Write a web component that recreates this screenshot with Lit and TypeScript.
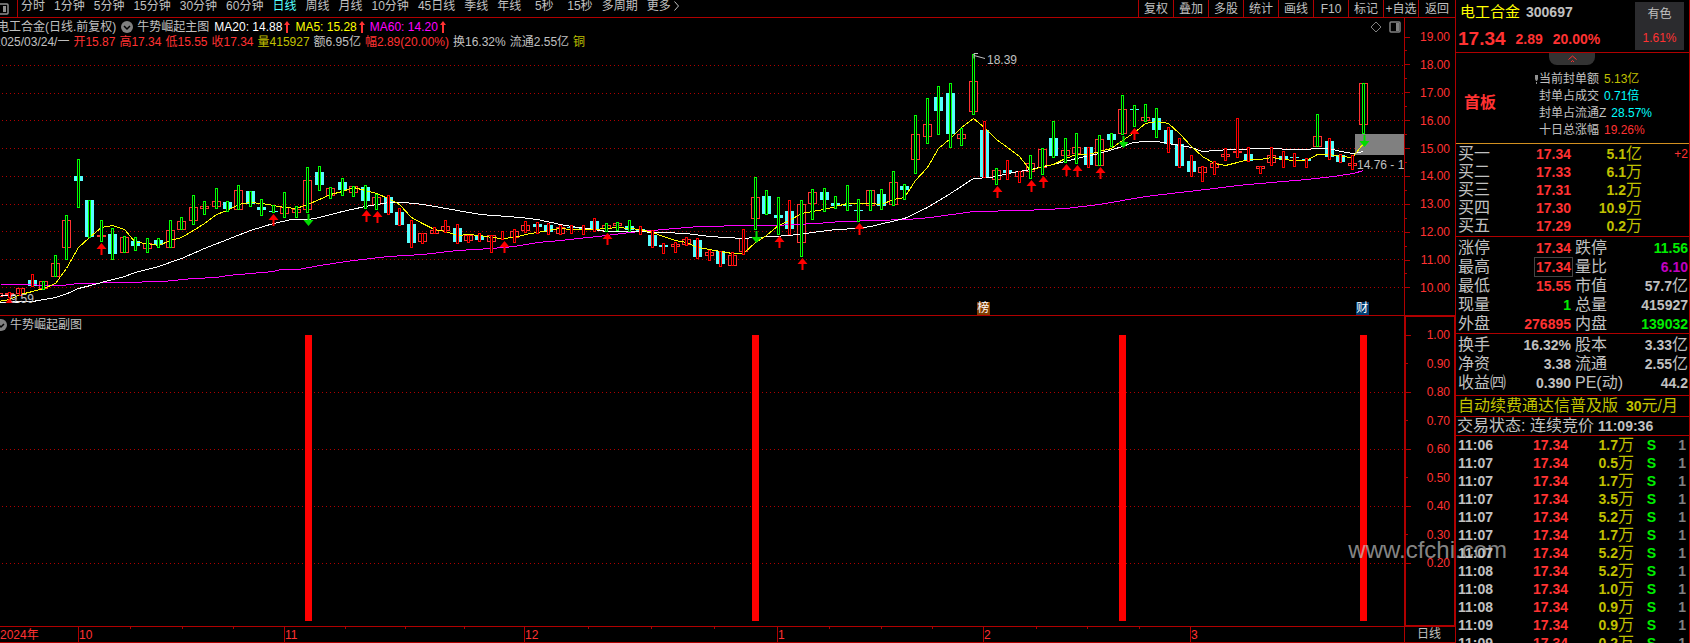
import { LitElement, html, svg, css } from "lit";
import { customElement } from "lit/decorators.js";
import { classMap } from "lit/directives/class-map.js";

type Bar = [number, number, "r" | "c", number, number, "g" | "r"];

// Session bars: body top, body bottom, body kind, range top, range bottom, signal colour.
const BARS: Bar[] = [
  [293, 296, "r", 293, 296, "r"], [293, 294, "r", 292, 297, "r"], [288, 293, "r", 288, 295, "r"], [280, 285, "c", 274, 286, "r"],
  [281, 288, "r", 281, 289, "g"], [263, 276, "r", 255, 276, "g"], [220, 247, "r", 215, 259, "g"], [176, 180, "c", 159, 207, "g"],
  [200, 236, "c", 200, 237, "g"], [235, 236, "r", 220, 241, "g"], [234, 253, "c", 228, 259, "g"], [237, 252, "r", 236, 252, "g"],
  [241, 245, "c", 237, 250, "g"], [243, 248, "r", 238, 252, "g"], [240, 244, "c", 238, 247, "g"], [230, 247, "r", 220, 247, "g"],
  [221, 229, "r", 217, 229, "g"], [207, 220, "r", 195, 224, "g"], [206, 208, "r", 201, 214, "g"], [201, 206, "r", 188, 208, "g"],
  [202, 208, "c", 201, 211, "g"], [190, 209, "r", 185, 209, "g"], [191, 203, "c", 191, 206, "g"], [207, 209, "c", 199, 215, "g"],
  [211, 211, "c", 205, 212, "g"], [207, 213, "r", 192, 217, "g"], [209, 212, "r", 206, 217, "g"], [180, 209, "r", 167, 212, "g"],
  [172, 184, "c", 166, 190, "g"], [188, 195, "r", 187, 198, "g"], [182, 189, "c", 178, 195, "g"], [186, 192, "r", 186, 196, "g"],
  [187, 200, "c", 185, 208, "g"], [197, 204, "r", 194, 209, "g"], [197, 212, "c", 195, 214, "r"], [212, 224, "c", 208, 225, "r"],
  [224, 242, "c", 220, 247, "r"], [233, 241, "r", 233, 243, "r"], [230, 233, "r", 227, 233, "r"], [226, 230, "r", 220, 232, "r"],
  [228, 241, "c", 224, 243, "r"], [235, 240, "r", 235, 242, "r"], [236, 239, "c", 233, 241, "r"], [235, 241, "r", 235, 252, "r"],
  [237, 237, "r", 231, 239, "r"], [231, 237, "r", 229, 242, "r"], [225, 230, "r", 221, 232, "r"], [224, 226, "c", 222, 233, "r"],
  [225, 231, "c", 223, 234, "r"], [227, 233, "r", 225, 234, "r"], [227, 227, "c", 225, 233, "r"], [228, 228, "c", 225, 234, "r"],
  [221, 229, "c", 218, 231, "r"], [225, 228, "r", 223, 231, "g"], [223, 225, "r", 222, 230, "g"], [226, 229, "c", 220, 231, "g"],
  [229, 230, "c", 226, 234, "r"], [235, 245, "c", 230, 247, "r"], [245, 246, "c", 243, 253, "r"], [244, 246, "r", 242, 252, "r"],
  [239, 244, "r", 237, 245, "r"], [240, 256, "c", 238, 258, "r"], [252, 255, "r", 250, 260, "r"], [251, 263, "c", 251, 266, "r"],
  [255, 265, "r", 252, 265, "r"], [238, 251, "r", 229, 254, "r"], [197, 218, "r", 177, 229, "g"], [196, 213, "c", 190, 214, "g"],
  [215, 217, "c", 197, 234, "g"], [211, 228, "c", 200, 234, "r"], [204, 242, "r", 200, 256, "g"], [192, 203, "r", 189, 219, "g"],
  [192, 199, "c", 188, 211, "g"], [203, 205, "c", 196, 208, "g"], [205, 205, "c", 185, 210, "g"], [210, 210, "c", 199, 221, "g"],
  [190, 205, "r", 190, 210, "g"], [194, 205, "c", 189, 209, "g"], [182, 204, "r", 171, 205, "g"], [186, 189, "c", 184, 199, "g"],
  [134, 159, "r", 115, 173, "g"], [124, 136, "r", 98, 143, "g"], [97, 110, "c", 86, 134, "g"], [93, 133, "c", 83, 147, "g"],
  [134, 138, "r", 128, 145, "g"], [81, 111, "r", 54, 114, "g"], [130, 176, "c", 121, 177, "r"], [170, 179, "r", 168, 184, "g"],
  [170, 172, "c", 160, 179, "r"], [171, 176, "r", 171, 182, "r"], [163, 171, "r", 155, 178, "g"], [149, 167, "r", 148, 174, "g"],
  [138, 155, "c", 121, 157, "g"], [150, 155, "r", 138, 162, "g"], [147, 153, "r", 133, 163, "g"], [147, 164, "c", 147, 167, "r"],
  [139, 165, "r", 135, 165, "g"], [134, 139, "c", 133, 146, "g"], [109, 133, "r", 95, 134, "g"], [109, 109, "c", 105, 126, "g"],
  [117, 120, "r", 104, 121, "g"], [118, 129, "c", 108, 137, "g"], [130, 143, "c", 127, 152, "r"], [144, 165, "c", 138, 167, "r"],
  [161, 171, "c", 155, 176, "r"], [167, 172, "r", 166, 181, "r"], [163, 167, "r", 161, 174, "r"], [154, 156, "r", 148, 160, "r"],
  [151, 152, "r", 118, 157, "r"], [154, 160, "c", 147, 161, "r"], [166, 168, "r", 166, 173, "r"], [155, 162, "r", 147, 165, "r"],
  [156, 159, "c", 151, 167, "r"], [157, 157, "c", 153, 166, "r"], [159, 160, "c", 158, 167, "r"], [136, 146, "r", 114, 146, "g"],
  [141, 156, "c", 138, 159, "r"], [155, 161, "c", 154, 162, "r"], [163, 165, "r", 155, 169, "r"], [83, 124, "r", 83, 133, "g"],
];

const FIRST_X = -2;
const barX = (i: number) => (i === 0 ? FIRST_X : Math.round(9 + (i - 1) * 11.4746));

const MA5 = [
  301, 299, 294, 291, 288, 283, 268, 247, 237, 227, 225, 229, 242, 243, 245, 240, 237, 230, 223, 214, 210, 204, 202, 203, 205,
  207, 208, 204, 199, 194, 191, 187, 190, 193, 198, 204, 217, 223, 229, 231, 235, 234, 235, 237, 238, 237, 234, 232, 230, 228,
  229, 229, 229, 228, 227, 228, 229, 232, 236, 240, 242, 247, 249, 251, 253, 253, 242, 235, 225, 220, 213, 211, 209, 206,
  203, 203, 203, 204, 199, 197, 180, 167, 148, 138, 127, 118, 127, 139, 147, 156, 170, 166, 164, 158, 154, 154, 151, 148,
  140, 132, 123, 121, 123, 133, 146, 156, 163, 165, 162, 159, 159, 157, 159, 160, 160, 154, 154, 156, 157, 143,
];
const MA20 =
  "0,302 20,301 32,301 44,299 55,297 67,293 78,288 90,285 101,282 124,276 135,272 158,266 181,258 204,248 227,239 250,230 273,223 " +
  "291,219 308,219 319,217 342,211 365,206 388,202 403,202 423,204 457,210 480,214 520,217 537,219 560,224 571,226 594,229 606,231 " +
  "629,231 663,232 686,233 709,236 743,238 755,237 789,235 812,232 835,229 858,228 870,226 904,218 927,207 950,193 973,178 " +
  "990,177 1013,172 1030,169 1053,164 1076,158 1099,153 1122,146 1133,142 1145,141 1156,141 1168,143 1191,147 1202,151 1230,149 " +
  "1270,148 1293,149 1329,148 1340,151 1353,153 1363,151";
const MA60 =
  "0,284 33,284 40,285 62,285 78,283 163,281 193,278 216,277 227,275 273,271 280,269 298,269 319,265 353,260 388,256 422,254 " +
  "457,250 491,248 514,246 537,242 560,240 606,235 629,232 663,229 698,226 750,225 773,225 817,223 840,221 907,219 930,217 " +
  "973,211 1023,210 1065,208 1099,204 1145,196 1179,192 1214,188 1237,185 1271,182 1306,179 1333,176 1353,173 1363,170";

const UP: [number, number][] = [
  [101, 243], [273, 214], [366, 210], [377, 211], [504, 241], [607, 233], [779, 236], [802, 258], [859, 223],
  [997, 186], [1031, 180], [1043, 176], [1066, 164], [1077, 165], [1100, 167], [1134, 128],
];
const DOWN: [number, number][] = [[308, 214], [756, 231], [1123, 136], [1364, 135]];

const PRICE_ROWS = [65, 93, 120, 148, 176, 204, 231, 259, 287];
const RATIO_ROWS = [392, 449, 506, 563];
const SPIKES = [305, 752, 1119, 1360];

const PERIODS = [
  "分时", "1分钟", "5分钟", "15分钟", "30分钟", "60分钟", "日线", "周线", "月线", "10分钟", "45日线", "季线", "年线",
  "5秒", "15秒", "多周期", "更多",
];
const ACTIONS = ["复权", "叠加", "多股", "统计", "画线", "F10", "标记", "+自选", "返回"];

const OHLC: [string, string][] = [
  ["开15.87", "red"], ["高17.34", "red"], ["低15.55", "red"], ["收17.34", "red"], ["量415927", "gold"],
  ["额6.95亿", "grey"], ["幅2.89(20.00%)", "red"], ["换16.32%", "grey"], ["流通2.55亿", "grey"], ["铜", "gold"],
];

const BIDS = [
  ["买一", "17.34", "5.1", "亿", "+2"], ["买二", "17.33", "6.1", "万", ""], ["买三", "17.31", "1.2", "万", ""],
  ["买四", "17.30", "10.9", "万", ""], ["买五", "17.29", "0.2", "万", ""],
];

const STATS = [
  ["涨停", "17.34", "red", "跌停", "11.56", "green"],
  ["最高", "17.34", "red boxed", "量比", "6.10", "purple"],
  ["最低", "15.55", "red", "市值", "57.7亿", "grey"],
  ["现量", "1", "green", "总量", "415927", "grey"],
  ["外盘", "276895", "red", "内盘", "139032", "green"],
];
const FUNDAMENTALS = [
  ["换手", "16.32%", "grey", "股本", "3.33亿", "grey"],
  ["净资", "3.38", "grey", "流通", "2.55亿", "grey"],
  ["收益㈣", "0.390", "grey", "PE(动)", "44.2", "grey"],
];

const TICKS = [
  ["11:06", "1.7"], ["11:07", "0.5"], ["11:07", "1.7"], ["11:07", "3.5"], ["11:07", "5.2"], ["11:07", "1.7"],
  ["11:07", "5.2"], ["11:08", "5.2"], ["11:08", "1.0"], ["11:08", "0.9"], ["11:09", "0.9"], ["11:09", "0.2"],
];

const MONTHS = ["10", "11", "12", "1", "2", "3"];

// Splits a trailing unit such as 亿 so that it keeps the lighter, larger face.
const amount = (v: string) => {
  const m = /^(.*?)([亿万])$/.exec(v);
  return m ? html`<b>${m[1]}</b>${m[2]}` : html`<b>${v}</b>`;
};

const chevronBadge = html`<svg class="badge" viewBox="0 0 12 12" aria-hidden="true">
  <circle cx="6" cy="6" r="6" fill="#808080"></circle>
  <path d="M3 5l3 3 3-3" fill="none" stroke="#000" stroke-width="1.5"></path>
</svg>`;
const rise = html`<svg class="rise" viewBox="0 0 6 12" aria-hidden="true">
  <path d="M3 0L6 4H4V12H2V4H0Z" fill="#ff3232"></path>
</svg>`;

@customElement("app-root")
export class AppRoot extends LitElement {
  static styles = css`
    :host {
      display: grid;
      grid-template-columns: minmax(0, 1fr) 235px;
      height: 100vh;
      overflow: hidden;
      position: relative;
      background: #000;
      color: #c0c0c0;
      font: 12px/14px "Liberation Sans", "Noto Sans CJK SC", sans-serif;
      --line: #b00000;
    }
    * { box-sizing: border-box; }
    button { all: unset; box-sizing: border-box; cursor: pointer; white-space: nowrap; }
    button:focus-visible { outline: 1px solid #5ff; }
    .red { color: #ff3232; }
    .gold { color: #c0c000; }
    .yellow { color: #ff0; }
    .green { color: #0e0; }
    .purple { color: #c000c0; }
    .magenta { color: #f0f; }
    .white { color: #fff; }
    .cyan { color: #0ff; }
    .grey { color: #c0c0c0; }

    .work {
      display: grid;
      grid-template-columns: minmax(0, 1fr) 51px;
      grid-template-rows: 18px minmax(0, 298fr) minmax(0, 311fr) 16px;
      min-height: 0;
    }
    .toolbar {
      grid-column: 1 / -1;
      display: flex;
      justify-content: space-between;
      border-bottom: 1px solid var(--line);
      line-height: 12px;
      overflow: hidden;
    }
    .periods { display: flex; }
    .toggle { width: 18px; border-right: 1px solid var(--line); display: flex; align-items: center; }
    .toggle svg { width: 9px; height: 12px; display: block; }
    .period-list { display: flex; gap: 9px; padding-left: 3px; align-items: flex-start; }
    .period-list button { text-align: center; }
    .period-list .wide { min-width: 28px; }
    .period-list .on { color: #5ff; }
    .more { display: flex; align-items: center; gap: 3px; }
    .more svg { width: 5px; height: 10px; }
    .actions { display: flex; }
    .actions button { width: 35px; border-left: 1px solid var(--line); text-align: center; }
    .actions button:last-child { width: 37px; }

    .panel { position: relative; border-bottom: 1px solid var(--line); min-height: 0; overflow: hidden; }
    .plot { display: block; width: 100%; height: 100%; }
    .legend { position: absolute; left: 0; top: 1px; }
    .legend div { display: flex; align-items: center; height: 15px; white-space: nowrap; }
    .legend .name { margin-left: -3px; gap: 5px; }
    .legend .name .title { display: flex; align-items: center; gap: 4px; }
    .legend .name .value { display: flex; align-items: center; gap: 2px; }
    .legend .day { margin-left: -6px; gap: 4px; }
    .legend .sub { gap: 3px; margin-left: -5px; }
    .badge { width: 12px; height: 12px; flex: none; }
    .rise { width: 6px; height: 12px; }
    .tools { position: absolute; right: 3px; top: 3px; display: flex; gap: 7px; }
    .tools svg { display: block; width: 12px; height: 12px; }
    .note { position: absolute; white-space: nowrap; }
    .high { left: 70.3%; top: 35px; }
    .low { left: 0.75%; bottom: 9px; }
    .range { left: 96.65%; top: 140px; }
    .flag { width: 13px; height: 13px; line-height: 13px; bottom: 0; color: #fff; }
    .list { left: 69.6%; background: #803c00; }
    .report { left: 96.6%; background: #003c70; }

    .scale {
      list-style: none; margin: 0; text-align: right;
      display: flex; flex-direction: column; justify-content: space-between;
      border: 0 solid var(--line); border-left-width: 1px; min-height: 0;
    }
    .scale li { display: flex; align-items: center; justify-content: space-between; height: 14px; }
    .scale li::before { content: ""; width: 5px; height: 1px; background: var(--line); }
    .scale .minor::before { width: 2px; }
    .scale .gap { height: 1px; }
    .price { padding: 12px 5px 21px 0; border-bottom: 0; }
    .ratio { padding: 11px 4px 55px 0; border-width: 2px 1px 2px 2px; margin-top: -1px; }

    .months {
      display: grid;
      grid-template-columns: 78fr 206fr 240fr 253fr 206fr 207fr 214fr;
      border-bottom: 1px solid var(--line);
      color: #ff3232;
      line-height: 16px;
    }
    .month { position: relative; display: grid; grid-template-columns: repeat(4, 1fr); border-left: 1px solid var(--line); }
    .month i { height: 2px; border-left: 1px solid var(--line); }
    .month i:first-child, .month:last-child i { border: 0; }
    .month span { position: absolute; left: 0; top: 0; }
    .mode { border-left: 1px solid var(--line); border-bottom: 1px solid var(--line); text-align: center; padding-right: 2px; line-height: 15px; }

    .quote { border: 0 solid var(--line); border-width: 0 1px; min-width: 0; min-height: 0; overflow: hidden; font-size: 14px; }
    .head { display: flex; justify-content: space-between; height: 53px; padding: 2px 5px 0 2px; border-bottom: 1px solid var(--line); }
    .ident { display: flex; gap: 6px; align-items: center; height: 20px; margin-left: 2px; }
    .ident h1 { font-size: 15px; font-weight: 400; margin: 0; }
    .last { display: flex; gap: 10px; align-items: center; height: 20px; margin-top: 7px; }
    .last strong { font-size: 19px; }
    .sector { width: 49px; height: 48px; background: #2b2b2e; font-size: 12px; display: flex; flex-direction: column; align-items: center; justify-content: space-between; padding: 5px 0; }
    .seal { display: flex; align-items: center; height: 91px; border-bottom: 1px solid #d29020; position: relative; padding-left: 8px; }
    .seal h2 { font-size: 16px; margin: 10px 0 0; width: 70px; line-height: 18px; }
    .fold { position: absolute; left: 40%; top: 0; width: 46px; height: 12px; background: #333; border-radius: 0 0 8px 8px; display: flex; justify-content: center; align-items: center; }
    .fold svg { width: 9px; height: 8px; }
    .seal dl { margin: 14px 0 0; font-size: 12px; line-height: 17px; }
    .seal dl div { display: flex; gap: 5px; align-items: center; }
    .seal dt, .seal dd { margin: 0; white-space: nowrap; }
    .seal .mark { width: 5px; height: 9px; margin-right: -5px; }
    .seal .mark.none { visibility: hidden; }

    table { width: 100%; border-collapse: separate; border-spacing: 0; table-layout: fixed; border-bottom: 1px solid var(--line); padding: 1px 0 0; }
    td, th { padding: 0; font-weight: 400; text-align: right; white-space: nowrap; height: 19px; line-height: 18px; }
    th { text-align: left; font-size: 16px; padding-left: 2px; }
    b { font-size: 14px; font-weight: 700; }
    .unit { font-size: 16px; }
    .bids { padding-bottom: 1px; }
    .bids td, .bids th { height: 18px; }
    .funds { padding-bottom: 3px; }
    .boxed b { outline: 1px solid #444; outline-offset: 1px; }
    .stats .second { padding-left: 4px; }
    .stats .edge { padding-right: 1px; }
    .c50 { width: 50px; } .c62 { width: 62px; } .c65 { width: 65px; } .c66 { width: 66px; } .c71 { width: 71px; } .c22 { width: 22px; }
    .extra { font-size: 12px; padding-right: 1px; }
    .promo, .state { border-bottom: 1px solid var(--line); font-size: 16px; line-height: 18px; white-space: nowrap; padding-left: 2px; display: flex; align-items: center; }
    .promo { height: 21px; }
    .promo a { color: inherit; text-decoration: none; display: flex; gap: 8px; align-items: center; }
    .state { height: 19px; gap: 4px; padding-left: 1px; }
    .ticks { border: 0; padding: 0; }
    .ticks th { font-size: 14px; }
    .ticks td, .ticks th { height: 18px; }
    .ticks .count { color: #808080; padding-right: 3px; }
    .watermark {
      position: absolute; right: 183px; top: 536px; font-size: 24px; line-height: 27px;
      color: rgba(200, 200, 200, 0.68); pointer-events: none;
    }
  `;

  private bars() {
    return BARS.map(([t, b, kind], i) => {
      const x = barX(i);
      return kind === "c"
        ? svg`<rect x=${x - 4} y=${t} width="9" height=${b - t + 1} fill="#54ffff"></rect>`
        : svg`<rect x=${x - 3.5} y=${t + 0.5} width="8" height=${b - t} fill="#000" stroke="#ff3232"></rect>`;
    });
  }

  private wicks() {
    return BARS.map(([, , , t, b, c], i) => svg`<rect x=${barX(i) - 0.5} y=${t + 0.5} width="2" height=${b - t} fill="#000"
      stroke=${c === "g" ? "#00ff00" : "#ff0000"}></rect>`);
  }

  private mainPlot() {
    return html`<svg class="plot" viewBox="0 18 1404 297" preserveAspectRatio="none" role="img" aria-label="牛势崛起主图">
      <g stroke="#b00000" stroke-dasharray="1 3" shape-rendering="crispEdges">
        ${PRICE_ROWS.map((y) => svg`<line x1="2" x2="1404" y1=${y + 0.5} y2=${y + 0.5}></line>`)}
      </g>
      <rect x="1355" y="134" width="49" height="21" fill="#808080"></rect>
      <g shape-rendering="crispEdges">${this.bars()}</g>
      <g fill="none" shape-rendering="crispEdges" transform="translate(.5 .5)">
        <polyline stroke="#ff00ff" points=${MA60}></polyline>
        <polyline stroke="#ffffff" points=${MA20}></polyline>
        <polyline stroke="#ffff00" points=${MA5.map((y, i) => `${barX(i)},${y}`).join(" ")}></polyline>
        <path d="M0 295h14M0 302h18" stroke="#fff"></path>
      </g>
      <g shape-rendering="crispEdges">${this.wicks()}</g>
      <path fill="#ff0000" d="M9.500 298l4 5h-8z"></path>
      ${UP.map(([x, y]) => svg`<path fill="#ff0000" d="M${x + 0.5} ${y}l5 6h-4v6h-2v-6h-4z"></path>`)}
      ${DOWN.map(([x, y]) => svg`<path fill="#00dc00" d="M${x + 0.5} ${y + 12}l5-6h-4v-6h-2v6h-4z"></path>`)}
      <path d="M985 58.500L974 55.500M978 53.500h-4v5" fill="none" stroke="#c0c0c0"></path>
    </svg>`;
  }

  private subPlot() {
    return html`<svg class="plot" viewBox="0 316 1404 310" preserveAspectRatio="none" role="img" aria-label="牛势崛起副图">
      <g stroke="#b00000" stroke-dasharray="1 3" shape-rendering="crispEdges">
        ${RATIO_ROWS.map((y) => svg`<line x1="2" x2="1404" y1=${y + 0.5} y2=${y + 0.5}></line>`)}
      </g>
      ${SPIKES.map((x) => svg`<rect x=${x} y="335" width="7" height="286" fill="#ff0000"></rect>`)}
    </svg>`;
  }

  private statTable(rows: string[][], extra = "") {
    return html`<table class="stats ${extra}">
      <colgroup><col class="c50" /><col class="c65" /><col class="c50" /><col /></colgroup>
      <tbody>
        ${rows.map(([a, av, ac, b, bv, bc]) => html`<tr>
          <th scope="row">${a}</th>
          <td class=${ac}><b>${av}</b></td>
          <th scope="row" class="second">${b}</th>
          <td class="unit edge ${bc}">${amount(bv)}</td>
        </tr>`)}
      </tbody>
    </table>`;
  }

  render() {
    return html`
      <main class="work">
        <nav class="toolbar">
          <div class="periods">
            <button class="toggle" aria-label="侧栏">
              <svg viewBox="0 0 9 12" aria-hidden="true">
                <rect x="-5" y="1" width="13" height="10" rx="1" fill="none" stroke="#909090" stroke-width="1.5"></rect>
                <rect x="3" y="3" width="3" height="6" fill="#909090"></rect>
              </svg>
            </button>
            <div class="period-list">
              ${PERIODS.map((p) => html`<button class=${classMap({ on: p === "日线", wide: p === "5秒", more: p === "更多" })}>${p}${
                p === "更多" ? html`<svg viewBox="0 0 5 10" aria-hidden="true"><path d="M.5.500L4.500 5 .5 9.500" fill="none" stroke="#c0c0c0"></path></svg>` : ""
              }</button>`)}
            </div>
          </div>
          <div class="actions">${ACTIONS.map((a) => html`<button>${a}</button>`)}</div>
        </nav>

        <section class="panel">
          ${this.mainPlot()}
          <div class="legend">
            <div class="name">
              <span class="title"><span>电工合金(日线.前复权)</span></span>
              <span class="title">${chevronBadge}<span>牛势崛起主图</span></span>
              <span class="value white">MA20: 14.88${rise}</span>
              <span class="value yellow">MA5: 15.28${rise}</span>
              <span class="value magenta">MA60: 14.20${rise}</span>
            </div>
            <div class="day">
              <span>2025/03/24/一</span>${OHLC.map(([t, c]) => html`<span class=${c}>${t}</span>`)}
            </div>
          </div>
          <div class="tools">
            <svg viewBox="0 0 12 12" aria-hidden="true"><path d="M6 1l5 5-5 5-5-5z" fill="none" stroke="#808080"></path></svg>
            <svg viewBox="0 0 12 12" aria-hidden="true">
              <rect x="1" y="1" width="10" height="10" rx="1" fill="none" stroke="#808080" stroke-width="1.5"></rect>
              <rect x="7" y="2" width="3" height="8" fill="#808080"></rect>
            </svg>
          </div>
          <span class="note high">18.39</span>
          <span class="note low">9.59</span>
          <span class="note range">14.76 - 1</span>
          <span class="note flag list">榜</span>
          <span class="note flag report">财</span>
        </section>
        <ul class="scale price red">
          ${[19, 18, 17, 16, 15, 14, 13, 12, 11, 10].map((v, i) => html`${i ? html`<li class="minor gap"></li>` : ""}<li>${v.toFixed(2)}</li>`)}
        </ul>

        <section class="panel">
          ${this.subPlot()}
          <div class="legend"><div class="sub">${chevronBadge}<span>牛势崛起副图</span></div></div>
        </section>
        <ul class="scale ratio red">
          ${[10, 9, 8, 7, 6, 5, 4, 3, 2].map((v) => html`<li class=${classMap({ minor: v % 2 === 1 })}>${(v / 10).toFixed(2)}</li>`)}
        </ul>

        <div class="months">
          <span>2024年</span>
          ${MONTHS.map((m) => html`<div class="month"><i></i><i></i><i></i><i></i><span>${m}</span></div>`)}
        </div>
        <div class="mode">日线</div>
      </main>

      <aside class="quote">
        <header class="head">
          <div>
            <div class="ident"><h1 class="yellow">电工合金</h1><b>300697</b></div>
            <div class="last red"><strong>17.34</strong><b>2.89</b><b>20.00%</b></div>
          </div>
          <div class="sector"><span>有色</span><span class="red">1.61%</span></div>
        </header>
        <section class="seal">
          <button class="fold" aria-label="收起">
            <svg viewBox="0 0 9 8" aria-hidden="true"><path d="M.5 4.500L4.500 1l4 3.500M3 7l1.500-1.500L6 7" fill="none" stroke="#ff3232"></path></svg>
          </button>
          <h2 class="red">首板</h2>
          <dl>
            ${[["当前封单额", "5.13亿", "gold"], ["封单占成交", "0.71倍", "cyan"], ["封单占流通Z", "28.57%", "cyan"], ["十日总涨幅", "19.26%", "red"]].map(
              ([k, v, c], i) => html`<div>
                <svg class="mark ${i ? "none" : ""}" viewBox="0 0 5 9" aria-hidden="true"><path d="M1 0h3v4l-1 2h-1l-1-2zM2 7h1v2h-1z" fill="#909090"></path></svg>
                <dt>${k}</dt><dd class=${c}>${v}</dd>
              </div>`
            )}
          </dl>
        </section>

        <table class="bids">
          <colgroup><col class="c50" /><col class="c65" /><col class="c71" /><col /></colgroup>
          <tbody>
            ${BIDS.map(([k, p, q, u, d]) => html`<tr>
              <th scope="row">${k}</th><td class="red"><b>${p}</b></td>
              <td class="gold unit"><b>${q}</b>${u}</td><td class="red extra">${d}</td>
            </tr>`)}
          </tbody>
        </table>
        ${this.statTable(STATS)} ${this.statTable(FUNDAMENTALS, "funds")}
        <div class="promo gold"><a href="#"><span>自动续费通达信普及版</span><span><b>30</b>元/月</span></a></div>
        <div class="state"><span>交易状态: 连续竞价</span><b>11:09:36</b></div>
        <table class="ticks">
          <colgroup><col class="c50" /><col class="c62" /><col class="c66" /><col class="c22" /><col /></colgroup>
          <tbody>
            ${TICKS.map(([t, q]) => html`<tr>
              <th scope="row"><b>${t}</b></th><td class="red"><b>17.34</b></td>
              <td class="gold unit"><b>${q}</b>万</td><td class="green"><b>S</b></td><td class="count"><b>1</b></td>
            </tr>`)}
          </tbody>
        </table>
      </aside>
      <div class="watermark">www.cfchi.com</div>
    `;
  }
}
